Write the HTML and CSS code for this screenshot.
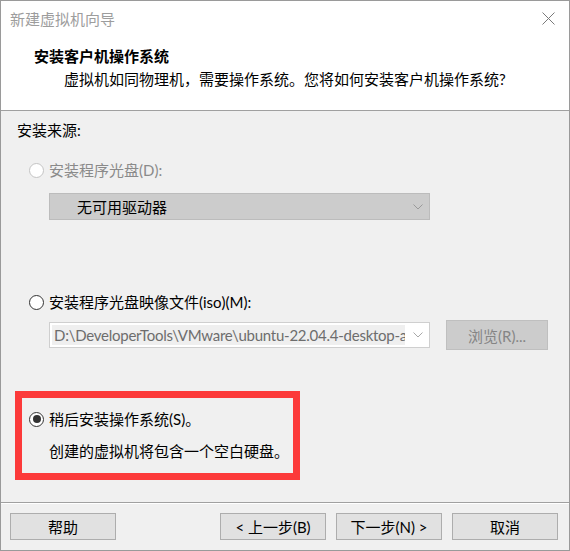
FILE: index.html
```html
<!DOCTYPE html>
<html lang="zh-CN">
<head>
<meta charset="utf-8">
<title>新建虚拟机向导</title>
<link rel="stylesheet" href="styles.css">
</head>
<body>
<div class="window">
  <div class="titlebar">
    <span class="title">新建虚拟机向导</span>
    <svg class="close" width="13" height="13" viewBox="0 0 13 13"><path d="M0.5 0.5 L12.5 12.5 M12.5 0.5 L0.5 12.5" stroke="#7a7a7a" stroke-width="1" fill="none"/></svg>
  </div>
  <div class="header">
    <div class="h-title">安装客户机操作系统</div>
    <div class="h-sub">虚拟机如同物理机，需要操作系统。您将如何安装客户机操作系统?</div>
  </div>
  <div class="content">
    <div class="label">安装来源:</div>
    <div class="option disabled"><span class="radio"></span><span>安装程序光盘(D):</span></div>
    <div class="select">
      <span class="select-text">无可用驱动器</span>
      <svg class="chev" width="10" height="6" viewBox="0 0 10 6"><path d="M0.5 0.5 L5 5 L9.5 0.5" stroke="#9a9a9a" fill="none"/></svg>
    </div>
    <div class="option second"><span class="radio"></span><span>安装程序光盘映像文件(iso)(M):</span></div>
    <div class="iso-row">
      <div class="combo">
        <span class="combo-text">D:\DeveloperTools\VMware\ubuntu-22.04.4-desktop-amd64.iso</span>
        <svg class="chev" width="10" height="6" viewBox="0 0 10 6"><path d="M0.5 0.5 L5 5 L9.5 0.5" stroke="#a8a8a8" fill="none"/></svg>
      </div>
      <div class="browse">浏览(R)...</div>
    </div>
    <div class="highlight">
      <div class="option checked-row"><span class="radio checked"></span><span>稍后安装操作系统(S)。</span></div>
      <div class="note">创建的虚拟机将包含一个空白硬盘。</div>
    </div>
  </div>
  <div class="footer">
    <div class="btn">帮助</div>
    <div class="nav">
      <div class="btn">&lt; 上一步(B)</div>
      <div class="btn">下一步(N) &gt;</div>
      <div class="btn">取消</div>
    </div>
  </div>
</div>
</body>
</html>
```
FILE: styles.css
```css
* { box-sizing: border-box; }
html, body { margin: 0; padding: 0; }
body {
  width: 570px;
  height: 551px;
  font-family: Lato, "Noto Sans CJK SC", sans-serif;
  font-size: 15px;
  color: #000;
  background: #fff;
}
.window {
  width: 570px;
  height: 551px;
  border: 1px solid #9a9a9a;
  display: flex;
  flex-direction: column;
  background: #f0f0f0;
}
.titlebar {
  height: 36px;
  background: #fff;
  display: flex;
  align-items: center;
  justify-content: space-between;
  padding-left: 9px;
  padding-right: 14px;
}
.title { color: #9d9d9d; line-height: 36px; }
.close { display: block; margin-top: -1px; }
.header {
  height: 74px;
  background: #fff;
  border-bottom: 1px solid #a0a0a0;
  padding-top: 9px;
}
.h-title { font-weight: bold; line-height: 20px; padding-left: 33px; }
.h-sub { line-height: 20px; margin-top: 3px; padding-left: 63px; }
.content {
  flex: 1;
  padding-top: 9px;
  padding-left: 16px;
}
.label { line-height: 20px; }
.option {
  display: flex;
  align-items: center;
  line-height: 20px;
  margin-left: 12px;
  margin-top: 20px;
}
.option.second { margin-top: 72px; }
.radio {
  width: 15px;
  height: 15px;
  border: 1px solid #333;
  border-radius: 50%;
  background: #fff;
  margin-right: 5px;
  display: flex;
  align-items: center;
  justify-content: center;
  flex: none;
}
.disabled { color: #8a8a8a; }
.disabled .radio { border-color: #c4c4c4; }
.radio.checked::after {
  content: "";
  width: 8px;
  height: 8px;
  border-radius: 50%;
  background: #333;
}
.select {
  margin-top: 13px;
  margin-left: 32px;
  width: 381px;
  height: 27px;
  background: #ccc;
  border: 1px solid #bcbcbc;
  display: flex;
  align-items: center;
  justify-content: space-between;
  padding-left: 27px;
  padding-right: 6px;
}
.select-text { line-height: 20px; }
.chev { display: block; flex: none; }
.iso-row {
  display: flex;
  align-items: center;
  margin-top: 8px;
  margin-left: 32px;
  gap: 16px;
}
.combo {
  width: 381px;
  height: 26px;
  background: #fff;
  border: 1px solid #cfcfcf;
  display: flex;
  align-items: center;
  padding: 2px 6px 2px 2px;
  gap: 8px;
}
.combo-text {
  flex: 1;
  background: #efefef;
  color: #6d6d6d;
  white-space: nowrap;
  overflow: hidden;
  line-height: 20px;
  padding-left: 2px;
  letter-spacing: -0.25px;
}
.browse {
  width: 102px;
  height: 30px;
  background: #ccc;
  border: 1px solid #bfbfbf;
  color: #858585;
  display: flex;
  align-items: center;
  justify-content: center;
}
.highlight {
  margin-top: 41px;
  margin-left: -2px;
  width: 285px;
  height: 89px;
  border: 7px solid #fc3a3a;
  padding-left: 7px;
  padding-top: 11px;
}
.option.checked-row { margin: 0; }
.note { line-height: 20px; margin-top: 12px; padding-left: 20px; }
.footer {
  height: 48px;
  border-top: 1px solid #a0a0a0;
  box-shadow: inset 0 1px 0 #fff;
  display: flex;
  justify-content: space-between;
  padding: 10px 11px 0 9px;
}
.nav { display: flex; gap: 10px; }
.btn {
  width: 106px;
  height: 27px;
  background: #e1e1e1;
  border: 1px solid #adadad;
  display: flex;
  align-items: center;
  justify-content: center;
  line-height: 20px;
}
```
